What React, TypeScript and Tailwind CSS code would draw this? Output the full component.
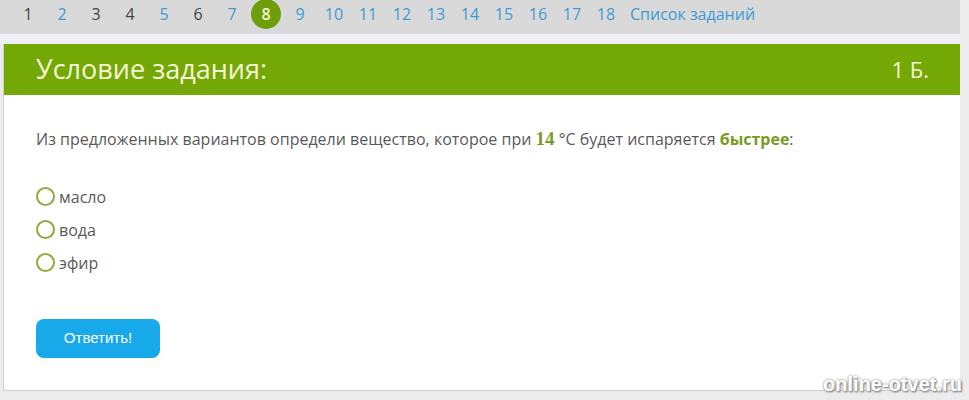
export default function App() {
  const nums = Array.from({ length: 18 }, (_, i) => i + 1);
  const dark = new Set([1, 3, 4, 6]);
  return (
    <div className="relative w-[969px] h-[400px] overflow-hidden bg-[#ececec] font-['Open_Sans',sans-serif]">
      {/* top nav */}
      <div className="w-[960px] h-[34px] bg-[#d9d9d9] flex items-center pl-[11px] pb-[6px] text-[16px]">
        {nums.map((n) =>
          n === 8 ? (
            <span
              key={n}
              className="w-[30px] h-[30px] mx-[2px] rounded-full bg-[#6e9e0c] text-[#f3f6c8] flex items-center justify-center font-semibold"
            >
              {n}
            </span>
          ) : (
            <span key={n} className={`w-[34px] text-center ${dark.has(n) ? "text-[#444]" : "text-[#3d9bd7]"}`}>
              {n}
            </span>
          )
        )}
        <span className="ml-[7px] text-[#3d9bd7]">Список заданий</span>
      </div>
      <div className="w-[960px] h-[10px] bg-[#eef0f6]" />

      {/* card */}
      <div className="ml-[3px] w-[957px] h-[347px] bg-white border-l border-b border-[#cfcfcf] flex flex-col">
        <div className="h-[51px] bg-[#74a806] flex items-center justify-between pl-[32px] pr-[31px] text-[#f6f7d6]">
          <span className="text-[27px]">Условие задания:</span>
          <span className="text-[22px]">1 Б.</span>
        </div>
        <div className="pl-[32px] pt-[30px] text-[16px] text-[#5a5a5a]">
          <p>
            Из предложенных вариантов определи вещество, которое при{" "}
            <span className="font-['Liberation_Serif',serif] font-bold text-[19px] text-[#7a9a23]">14</span> °C будет испаряется{" "}
            <span className="font-bold text-[#7a9a23]">быстрее</span>:
          </p>
          <div className="mt-[31px] flex flex-col gap-[9px]">
            {["масло", "вода", "эфир"].map((t) => (
              <label key={t} className="flex items-center gap-[4px]">
                <span className="w-[19px] h-[19px] rounded-full border-2 border-[#8eab3e]" />
                <span>{t}</span>
              </label>
            ))}
          </div>
          <button className="mt-[44px] w-[124px] h-[39px] rounded-[8px] bg-[#17a9e9] text-white text-[15px] font-['Liberation_Sans',sans-serif]">
            Ответить!
          </button>
        </div>
      </div>

      <span className="absolute right-[7px] bottom-[1px] text-[20px] font-bold text-white font-['Liberation_Sans',sans-serif] [text-shadow:0_0_3px_#888,1px_1px_2px_#777]">
        online-otvet.ru
      </span>
    </div>
  );
}
